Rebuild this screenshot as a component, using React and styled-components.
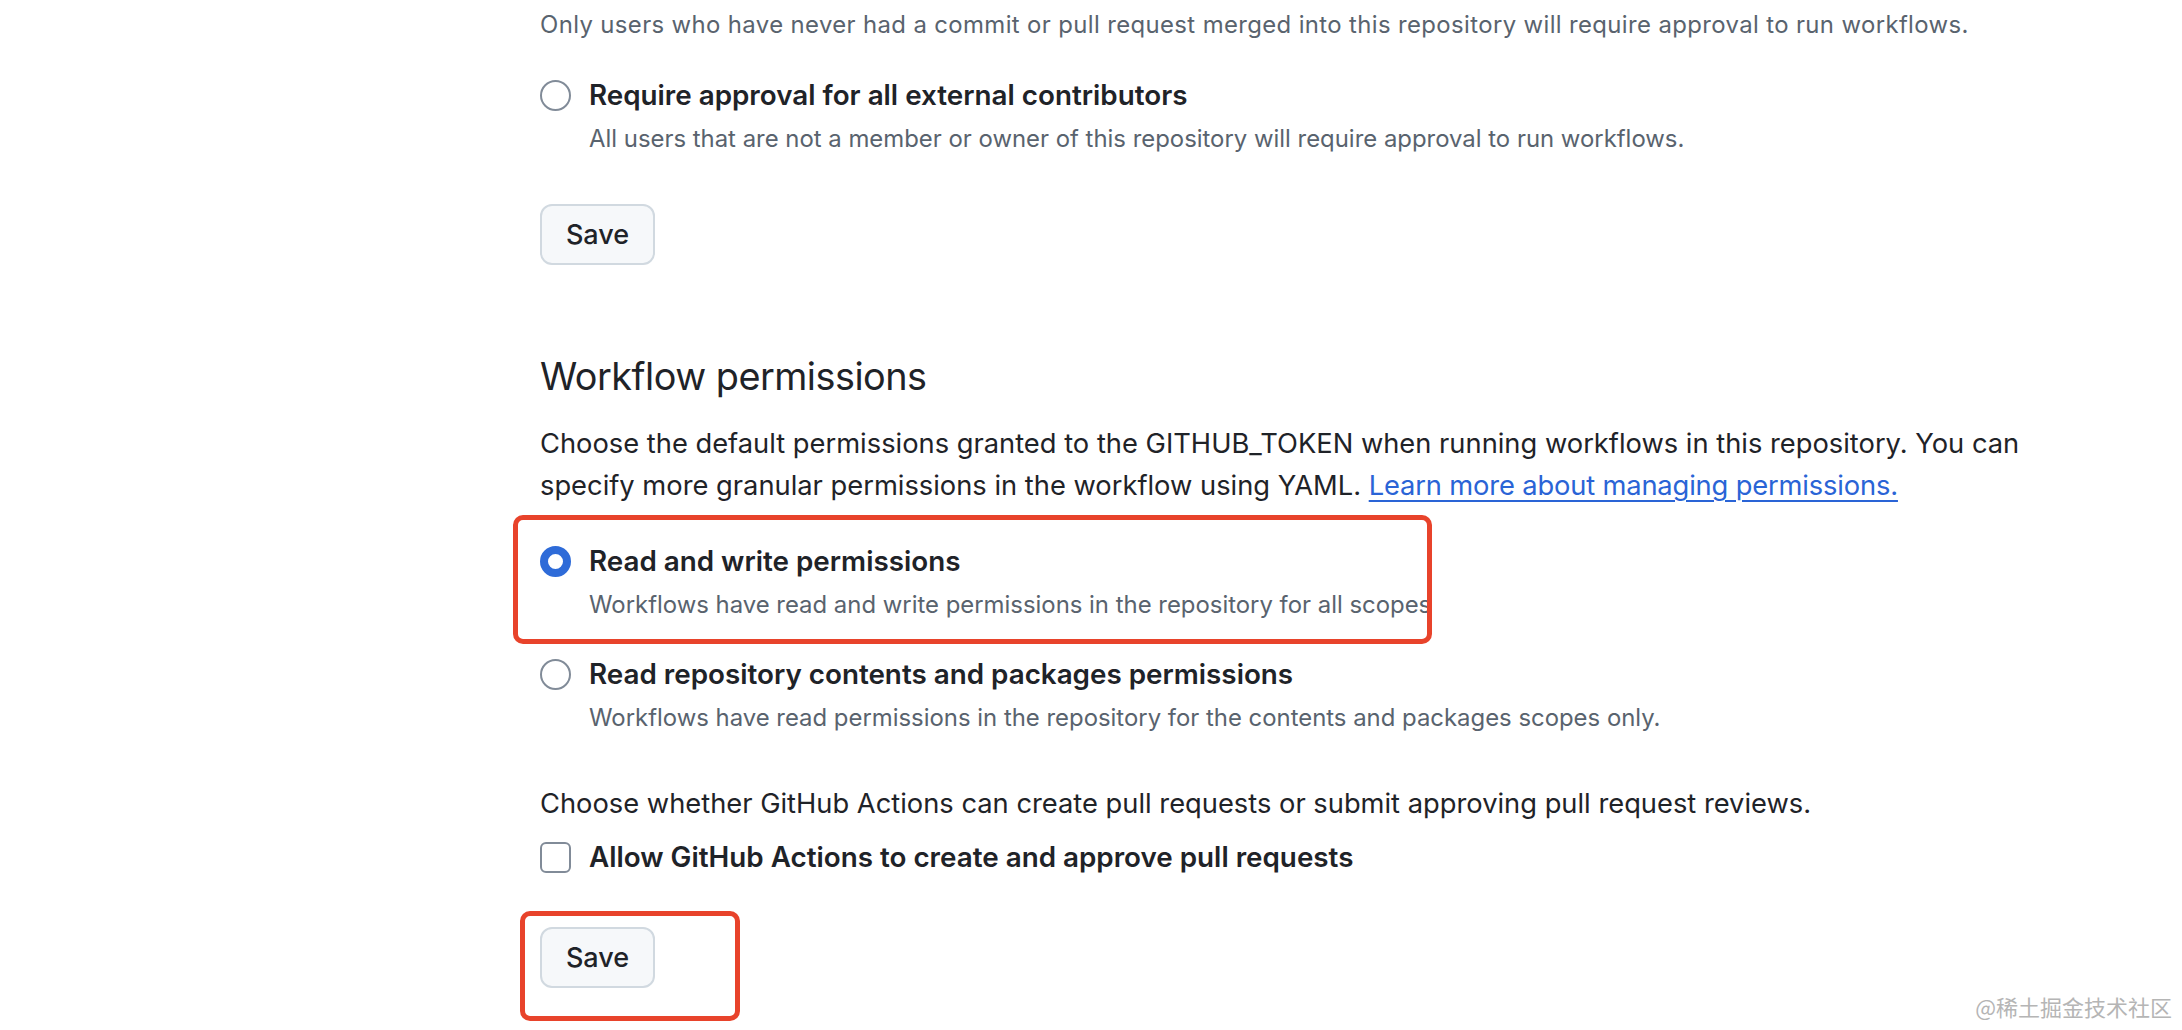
import React from "react";
import styled, { createGlobalStyle } from "styled-components";

const GlobalStyle = createGlobalStyle`
  html, body {
    margin: 0;
    padding: 0;
    background: #ffffff;
    overflow: hidden;
  }
  body {
    font-family: Inter, "Noto Sans", "Liberation Sans", sans-serif;
    color: #1f2328;
    -webkit-font-smoothing: antialiased;
  }
`;

function App() {
  return (
    <Page>
      <GlobalStyle />
      <Content>
        <Section>
          <Description $spacing={0.38}>
            Only users who have never had a commit or pull request merged into this repository will require approval to run workflows.
          </Description>
          <Option $top={31}>
            <Radio />
            <OptionText>
              <OptionTitle>Require approval for all external contributors</OptionTitle>
              <Description>
                All users that are not a member or owner of this repository will require approval to run workflows.
              </Description>
            </OptionText>
          </Option>
          <ButtonRow $top={46}>
            <Button>Save</Button>
          </ButtonRow>
        </Section>

        <Section>
          <Heading>Workflow permissions</Heading>
          <Paragraph>
            Choose the default permissions granted to the GITHUB_TOKEN when running workflows in this repository. You can
            specify more granular permissions in the workflow using YAML.{" "}
            <Link href="#">Learn more about managing permissions.</Link>
          </Paragraph>
          <OptionList>
            <Highlight $top={-26} $left={-27} $width={919} $height={129}>
              <Option>
                <Radio $checked />
                <OptionText>
                  <OptionTitle>Read and write permissions</OptionTitle>
                  <Description>
                    Workflows have read and write permissions in the repository for all scopes
                  </Description>
                </OptionText>
              </Option>
            </Highlight>
            <Option>
              <Radio />
              <OptionText>
                <OptionTitle>Read repository contents and packages permissions</OptionTitle>
                <Description>
                  Workflows have read permissions in the repository for the contents and packages scopes only.
                </Description>
              </OptionText>
            </Option>
          </OptionList>
          <Paragraph $top={46}>
            Choose whether GitHub Actions can create pull requests or submit approving pull request reviews.
          </Paragraph>
          <CheckRow>
            <Checkbox />
            <OptionTitle>Allow GitHub Actions to create and approve pull requests</OptionTitle>
          </CheckRow>
          <ButtonRow $top={50}>
            <Highlight $top={-16} $left={-20} $width={220} $height={110}>
              <Button>Save</Button>
            </Highlight>
          </ButtonRow>
        </Section>
      </Content>
      <Watermark>@稀土掘金技术社区</Watermark>
    </Page>
  );
}

// Styled components
const Page = styled.div`
  position: relative;
  width: 2182px;
  height: 1030px;
  overflow: hidden;
`;

const Content = styled.div`
  width: 1500px;
  padding: 6px 0 0 540px;
  display: flex;
  flex-direction: column;
`;

const Section = styled.div`
  display: flex;
  flex-direction: column;
  align-items: flex-start;
`;

const Description = styled.div`
  font-size: 23.9px;
  line-height: 38px;
  letter-spacing: ${(props) => props.$spacing || 0}px;
  color: #59636e;
`;

const Option = styled.div`
  display: flex;
  align-items: flex-start;
  gap: 18px;
  margin-top: ${(props) => props.$top || 0}px;
`;

const OptionList = styled.div`
  display: flex;
  flex-direction: column;
  align-items: flex-start;
  gap: 30px;
  margin-top: 34px;
`;

const OptionText = styled.div`
  display: flex;
  flex-direction: column;
  gap: 5px;
`;

const OptionTitle = styled.div`
  font-size: 27.8px;
  line-height: 40px;
  font-weight: 600;
  color: #1f2328;
`;

const Radio = styled.span`
  flex: none;
  box-sizing: border-box;
  width: 31px;
  height: 31px;
  margin-top: 5px;
  border-radius: 50%;
  background: #ffffff;
  border: ${(props) => (props.$checked ? "8px solid #2e6bd8" : "2px solid #818b98")};
`;

const Checkbox = styled.span`
  flex: none;
  box-sizing: border-box;
  width: 31px;
  height: 31px;
  border-radius: 6px;
  border: 2px solid #818b98;
  background: #ffffff;
`;

const CheckRow = styled.div`
  display: flex;
  align-items: center;
  gap: 18px;
  margin-top: 12px;
`;

const ButtonRow = styled.div`
  margin-top: ${(props) => props.$top}px;
`;

const Button = styled.button`
  box-sizing: border-box;
  width: 115px;
  height: 61px;
  border: 2px solid #d1d9e0;
  border-radius: 12px;
  background: #f6f8fa;
  color: #1f2328;
  font-family: inherit;
  font-size: 27px;
  font-weight: 500;
  cursor: pointer;
`;

const Heading = styled.h2`
  margin: 83px 0 0;
  font-size: 37.8px;
  line-height: 56px;
  letter-spacing: -0.5px;
  font-weight: 400;
  color: #1f2328;
`;

const Paragraph = styled.p`
  margin: ${(props) => props.$top || 19}px 0 0;
  font-size: 27.3px;
  line-height: 42px;
  color: #1f2328;
`;

const Link = styled.a`
  color: #2a64d6;
  letter-spacing: -0.15px;
  text-decoration: underline;
  text-underline-offset: 5px;
  text-decoration-thickness: 2px;
`;

const Highlight = styled.div`
  position: relative;

  &::after {
    content: "";
    position: absolute;
    top: ${(props) => props.$top}px;
    left: ${(props) => props.$left}px;
    width: ${(props) => props.$width}px;
    height: ${(props) => props.$height}px;
    box-sizing: border-box;
    border: 5px solid #e8432b;
    border-radius: 10px;
    pointer-events: none;
  }
`;

const Watermark = styled.div`
  position: absolute;
  right: 10px;
  bottom: 8px;
  font-family: "Noto Sans CJK SC", sans-serif;
  font-size: 22px;
  color: #b5b5b5;
`;

export default App;
